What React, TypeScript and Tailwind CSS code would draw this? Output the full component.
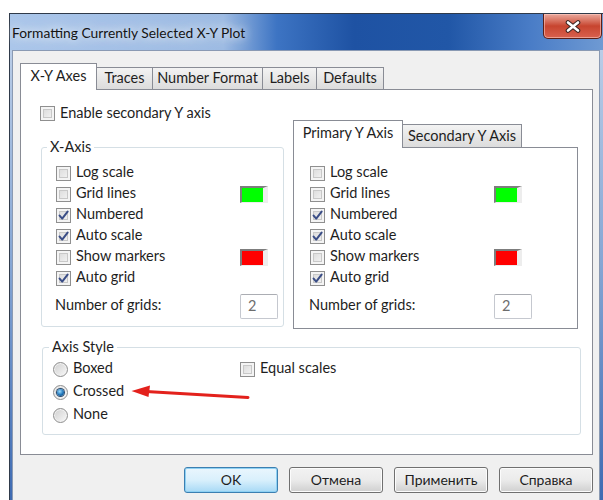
import React from "react";

const ui = "font-['Lato','Noto_Sans',sans-serif]";

function CheckBox({ checked }: { checked?: boolean }) {
  return (
    <span className="flex h-[15px] w-[15px] shrink-0 items-center justify-center border border-[#8f8f8f] bg-gradient-to-br from-[#d6d6d6] to-[#f8f8f8] [box-shadow:inset_0_0_0_2px_#f4f4f4,inset_0_0_0_3px_#c8c8c8]">
      {checked && (
        <svg width="11" height="11" viewBox="0 0 11 11">
          <path d="M1.6 5.6 L4.2 8.6 L9.6 1.6" fill="none" stroke="#3a4d86" strokeWidth="2" strokeLinecap="round" strokeLinejoin="round" />
        </svg>
      )}
    </span>
  );
}

function Radio({ checked }: { checked?: boolean }) {
  return (
    <span className="flex h-[15px] w-[15px] shrink-0 items-center justify-center rounded-full border border-[#8f8f8f] bg-gradient-to-br from-[#cfcfcf] to-[#f9f9f9] [box-shadow:inset_0_0_0_1px_#f2f2f2]">
      {checked && (
        <span className="h-[7px] w-[7px] rounded-full bg-[radial-gradient(circle_at_40%_35%,#9bdcff,#1f74b8_55%,#133f6e)] [box-shadow:0_0_0_1px_#2a4b6e]" />
      )}
    </span>
  );
}

function Swatch({ color }: { color: string }) {
  return (
    <span
      className="h-[17px] w-[28px] border-b border-l-2 border-r-[5px] border-t-2 border-b-[#ededed] border-l-[#7d7d7d] border-r-[#ededed] border-t-[#7d7d7d]"
      style={{ backgroundColor: color }}
    />
  );
}

function Label({ children }: { children: React.ReactNode }) {
  return <span className="pb-[3px] leading-none">{children}</span>;
}

function Check({ label, checked, swatch }: { label: string; checked?: boolean; swatch?: string }) {
  return (
    <div className="flex h-[21px] items-center">
      <div className="flex w-[184px] items-center gap-[5px]">
        <CheckBox checked={checked} />
        <Label>{label}</Label>
      </div>
      {swatch && <Swatch color={swatch} />}
    </div>
  );
}

function AxisOptions() {
  return (
    <>
      <Check label="Log scale" />
      <Check label="Grid lines" swatch="#00ff00" />
      <Check label="Numbered" checked />
      <Check label="Auto scale" checked />
      <Check label="Show markers" swatch="#ff0000" />
      <Check label="Auto grid" checked />
      <div className="mt-[5px] flex h-[25px] items-center">
        <span className="-ml-px w-[185px] pb-[3px] leading-none">Number of grids:</span>
        <span className="flex h-[25px] w-[38px] items-center rounded-[2px] border border-[#c5c8cf] border-t-[#abadb3] bg-white pb-[2px] pl-[7px] text-[#6d6d6d]">
          2
        </span>
      </div>
    </>
  );
}

function Button({ label, primary }: { label: string; primary?: boolean }) {
  return (
    <div
      className={
        primary
          ? "flex h-[26px] w-[94px] items-center justify-center rounded-[3px] border border-[#3c7fb1] bg-gradient-to-b from-[#eaf6fd] via-[#d9f0fc] to-[#a7d9f5] pb-[1px] text-[14px] [box-shadow:inset_0_0_0_1px_#8fd1f3]"
          : "flex h-[26px] w-[94px] items-center justify-center rounded-[3px] border border-[#707070] bg-gradient-to-b from-[#f2f2f2] via-[#ebebeb] to-[#cfcfcf] pb-[1px] text-[14px] [box-shadow:inset_0_0_0_1px_#fcfcfc]"
      }
    >
      {label}
    </div>
  );
}

function CloseButton() {
  return (
    <div className="flex h-[25px] w-[59px] items-center justify-center rounded-b-[5px] border border-t-0 border-[#5b1f18] bg-gradient-to-b from-[#e9a89d] via-[#c7442f] to-[#d9614e] [box-shadow:inset_0_0_0_1px_rgba(255,210,200,0.55)]">
      <svg width="18" height="13" viewBox="0 0 18 13">
        <path d="M4 2.5 L14 10.5 M14 2.5 L4 10.5" stroke="#3a2522" strokeWidth="4.6" strokeLinecap="round" />
        <path d="M4 2.5 L14 10.5 M14 2.5 L4 10.5" stroke="#ffffff" strokeWidth="2.6" strokeLinecap="round" />
      </svg>
    </div>
  );
}

export default function App() {
  return (
    <div className={`relative h-[500px] w-[603px] overflow-hidden bg-white pl-[9px] pt-[13px] text-[14.5px] text-[#1e1e1e] ${ui}`}>
      <div className="flex h-[500px] w-[594px] flex-col border-l border-t border-[#2f3a4a] bg-gradient-to-b from-[#c2d3ea] via-[#86a6d4] to-[#3a67b0]">
        {/* caption */}
        <div className="flex h-[36px] shrink-0 items-start justify-between bg-[linear-gradient(to_right,#aac6ea_0%,#9dbbe3_36%,#3d74c3_45%,#1e52a3_58%,#2157a7_74%,#4a7dc7_88%,#6f9ad3_100%)] pr-[1px]">
          <span className="ml-[2px] mt-[10px] text-[13.8px] leading-[18px] text-[#141414] [text-shadow:0_0_8px_rgba(255,255,255,0.95),0_0_16px_rgba(255,255,255,0.9)]">
            Formatting Currently Selected X-Y Plot
          </span>
          <CloseButton />
        </div>

        {/* client area */}
        <div className="ml-[2px] mr-[3px] flex-1 border border-[#8a9ab3] bg-[#f0f0f0] pl-[7px] pt-[12px]">
          <div className="w-[573px]">
            {/* tab strip */}
            <div className="flex h-[26px] items-end">
              <div className="relative z-10 -mb-px flex h-[27px] w-[77px] items-start justify-center border border-b-0 border-[#898c95] bg-white pt-[2px] leading-[20px]">
                X-Y Axes
              </div>
              {[
                ["Traces", "w-[56px]"],
                ["Number Format", "w-[110px]"],
                ["Labels", "w-[54px]"],
                ["Defaults", "w-[67px]"],
              ].map(([t, w]) => (
                <div
                  key={t}
                  className={`flex h-[22px] ${w} items-center justify-center border border-b-0 border-l-0 border-[#898c95] bg-gradient-to-b from-[#f3f3f3] to-[#dcdcdc] pb-[2px]`}
                >
                  {t}
                </div>
              ))}
            </div>

            {/* tab page */}
            <div className="h-[366px] border border-[#898c95] bg-white pl-[19px] pt-[16px]">
              <div className="flex h-[14px] items-center gap-[5px]">
                <CheckBox />
                <span className="leading-none">Enable secondary Y axis</span>
              </div>

              <div className="flex items-start">
                <fieldset className="ml-[1px] mt-[18px] w-[243px] rounded-[3px] border border-[#d5dfe5] pb-[7px] pl-[14px]">
                  <legend className="ml-[-9px] px-[3px] leading-[18px]">X-Axis</legend>
                  <div className="pt-[7px]">
                    <AxisOptions />
                  </div>
                </fieldset>

                <div className="ml-[9px] w-[285px]">
                  <div className="flex h-[27px] items-end">
                    <div className="relative z-10 -mb-px flex h-[28px] w-[110px] items-start justify-center border border-b-0 border-[#898c95] bg-white pt-[2px] leading-[20px]">
                      Primary Y Axis
                    </div>
                    <div className="flex h-[23px] w-[119px] items-center justify-center border border-b-0 border-l-0 border-[#898c95] bg-gradient-to-b from-[#f3f3f3] to-[#dcdcdc] pb-[1px]">
                      Secondary Y Axis
                    </div>
                  </div>
                  <div className="h-[182px] border border-[#898c95] bg-white pl-[16px] pt-[15px]">
                    <AxisOptions />
                  </div>
                </div>
              </div>

              <fieldset className="ml-[2px] mt-[9px] w-[539px] rounded-[3px] border border-[#d5dfe5] pb-[7px] pl-[10px]">
                <legend className="ml-[-4px] px-[3px] leading-[18px]">Axis Style</legend>
                <div className="pt-[2px]">
                  <div className="flex h-[23px] items-center">
                    <div className="flex w-[187px] items-center gap-[5px]">
                      <Radio />
                      <Label>Boxed</Label>
                    </div>
                    <div className="flex items-center gap-[5px]">
                      <CheckBox />
                      <Label>Equal scales</Label>
                    </div>
                  </div>
                  <div className="flex h-[23px] items-center gap-[5px]">
                    <Radio checked />
                    <Label>Crossed</Label>
                  </div>
                  <div className="flex h-[23px] items-center gap-[5px]">
                    <Radio />
                    <Label>None</Label>
                  </div>
                </div>
              </fieldset>
            </div>

            {/* dialog buttons */}
            <div className="mt-[12px] flex justify-end gap-[11px]">
              <Button label="OK" primary />
              <Button label="Отмена" />
              <Button label="Применить" />
              <Button label="Справка" />
            </div>
          </div>
        </div>
      </div>

      {/* annotation arrow */}
      <svg className="pointer-events-none absolute left-0 top-0" width="603" height="500" viewBox="0 0 603 500">
        <path d="M248 397.5 L146 391.6" stroke="#e3211c" strokeWidth="3" strokeLinecap="round" />
        <path d="M131.5 391 L150 385.5 L148.5 397 Z" fill="#e3211c" />
      </svg>
    </div>
  );
}
